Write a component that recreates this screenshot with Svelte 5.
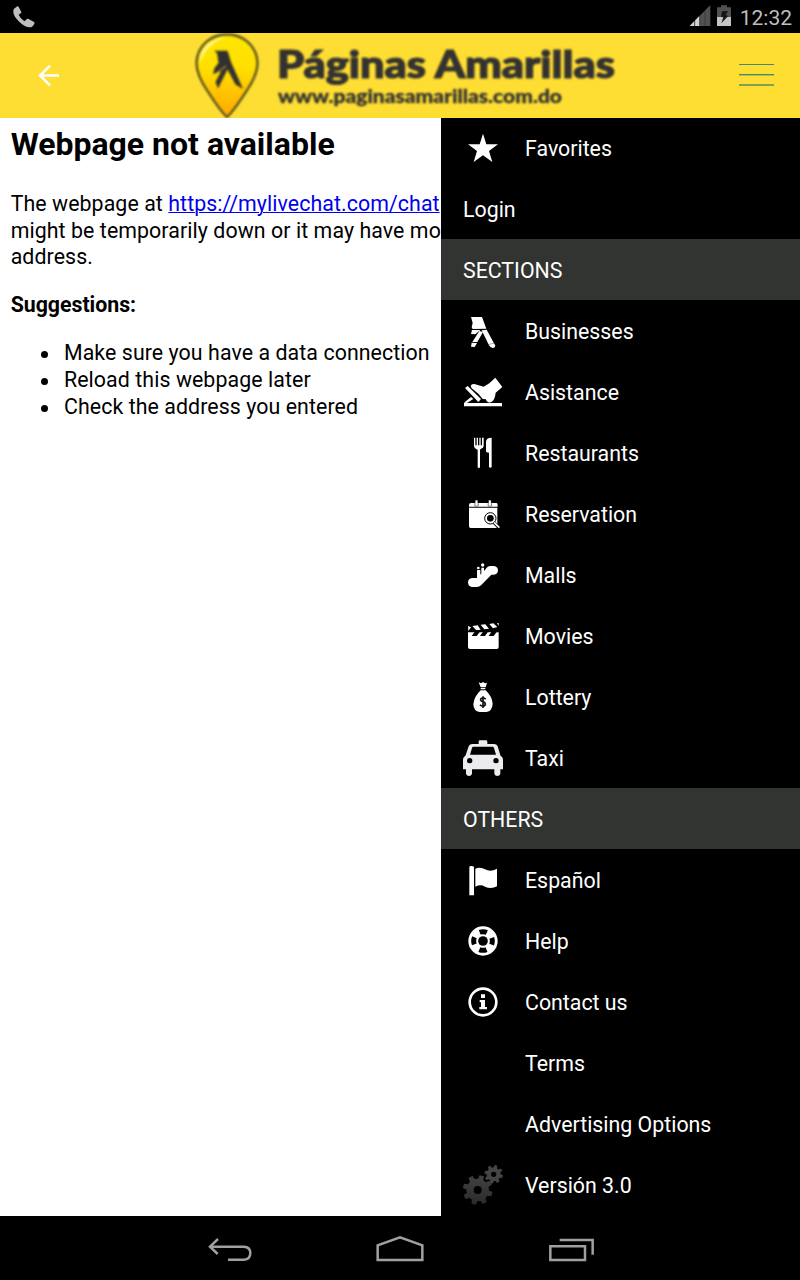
<script>
  const rows = [
    { label: 'Favorites', icon: 'star', vy: -24 },
    { label: 'Login', kind: 'plain' },
    { label: 'SECTIONS', kind: 'section' },
    { label: 'Businesses', icon: 'fingers', vy: -15 },
    { label: 'Asistance', icon: 'hand', vy: 168 },
    { label: 'Restaurants', icon: 'food', vy: 351 },
    { label: 'Reservation', icon: 'calendar', vy: -6 },
    { label: 'Malls', icon: 'escalator', vy: 177 },
    { label: 'Movies', icon: 'clapper', vy: 360 },
    { label: 'Lottery', icon: 'bag', vy: 3 },
    { label: 'Taxi', icon: 'taxi', vy: 186 },
    { label: 'OTHERS', kind: 'section' },
    { label: 'Español', icon: 'flag', vy: -18 },
    { label: 'Help', icon: 'ring', vy: 165 },
    { label: 'Contact us', icon: 'info', vy: 348 },
    { label: 'Terms', icon: 'none', vy: 0 },
    { label: 'Advertising Options', icon: 'none', vy: 0 },
    { label: 'Versión 3.0', icon: 'gears', vy: -3 }
  ];

  // Outline of a gear with flat teeth and a round hole in the middle
  function gear(cx, cy, outer, inner, hole, teeth, turn) {
    const step = (Math.PI * 2) / teeth;
    const pts = [];
    for (let i = 0; i < teeth; i++) {
      const a = i * step + turn;
      for (const [r, o] of [[inner, -0.31], [outer, -0.19], [outer, 0.19], [inner, 0.31]]) {
        pts.push(`${(cx + r * Math.cos(a + o * step)).toFixed(1)} ${(cy + r * Math.sin(a + o * step)).toFixed(1)}`);
      }
    }
    return `M${pts.join('L')}ZM${cx - hole} ${cy}a${hole} ${hole} 0 1 0 ${hole * 2} 0a${hole} ${hole} 0 1 0 ${-hole * 2} 0Z`;
  }
</script>

<div class="screen">
  <div class="status">
    <svg class="phone" width="36" height="33" viewBox="0 0 108 99">
      <path fill="#bebebe" d="M42 26l10-7q3-1 4 2l8 15q1 3-2 4l-6 4q4 10 17 20l8-7q3-2 5 0l16 9q3 2 1 5-5 11-14 11-15 0-33-18Q38 46 40 31z" />
    </svg>
    <div class="state">
      <svg width="44" height="33" viewBox="867 0 132 99">
        <path fill="#505250" d="M869 78L931 15V78z" />
        <path fill="#d4d4d4" d="M869 78L898 48V78z" />
        <path stroke="#000" stroke-width="2" d="M884 60v18" />
        <path stroke="#222" stroke-width="1.500" d="M899 44v34M915 28v50" />
        <path fill="#505250" d="M951 22h12v-6h18v6h12v30h-42z" />
        <path fill="#c4c4c4" d="M951 51h42v27h-42z" />
        <path fill="#151515" d="M966 34l18-1-7 13 8 1-21 23 6-18-7-1z" />
      </svg>
      <span class="time">12:32</span>
    </div>
  </div>

  <header>
    <svg class="back" width="24" height="85" viewBox="111 99 72 255">
      <path d="M150 197L120 226.500L150 256M120 226.500H177" fill="none" stroke="#fff" stroke-width="7.500" />
    </svg>
    <svg class="brand" width="430" height="85" viewBox="190 33 430 85">
      <defs>
        <linearGradient id="pin" x1="0" y1="0" x2="0" y2="1">
          <stop offset="0" stop-color="#ffe600" />
          <stop offset=".4" stop-color="#ffe000" />
          <stop offset="1" stop-color="#ffa800" />
        </linearGradient>
      </defs>
      <g class="soft">
        <path d="M227 34.300C243 34.300 257 46 257.500 63C257.500 72 252 83 246.500 91C240 101 233 112 227 117C221 112 214 101 207.500 91C202 83 196.500 72 196.500 63C197 46 211 34.300 227 34.300Z" fill="url(#pin)" stroke="#4b4525" stroke-width="2.200" />
        <path d="M200 63C199 48 211 38 226 37C213 42 204 50 200 63Z" fill="#fffbb0" opacity=".75" />
        <path d="M214 50.800H227.500L231 62L243 89L235.500 84.500L227.500 69.500L218 88.500L215.500 82L221 71.500L213 74L214.500 68L218.500 63L217 53Z" fill="#323130" />
        <path d="M216 73.500L226 66" stroke="#f4c70a" stroke-width="1" />
        <text class="name" x="277" y="77.500" textLength="338" lengthAdjust="spacingAndGlyphs">Páginas Amarillas</text>
        <text class="url" x="278" y="102.500" textLength="284" lengthAdjust="spacingAndGlyphs">www.paginasamarillas.com.do</text>
      </g>
    </svg>
    <svg class="burger" width="36" height="85" viewBox="739 33 36 85">
      <path fill="#438878" d="M739 64h35v1h-35zM739 74h35v1h-35z" />
      <path fill="#b3bd4a" d="M739 75h35v1h-35z" />
      <path fill="#82a150" d="M739 84h35v2h-35z" />
    </svg>
  </header>

  <div class="content">
    <main>
      <h2>Webpage not available</h2>
      <p>The webpage at <a href="https://mylivechat.com/chat">https://mylivechat.com/chat</a><br />might be temporarily down or it may have mo<br />address.</p>
      <p><b>Suggestions:</b></p>
      <ul>
        <li>Make sure you have a data connection</li>
        <li>Reload this webpage later</li>
        <li>Check the address you entered</li>
      </ul>
    </main>

    <aside>
      {#each rows as row}
        <div class="row {row.kind ?? 'item'}">
          {#if row.icon}
            <svg class="icon" width="60" height="61" viewBox="0 {row.vy} 180 183" fill="#fff">
              {#if row.icon === 'star'}
                <path d="M84 26L94 58H129L102 78L112 111L84 91L56 111L66 78L39 58H74Z" />
              {:else if row.icon === 'fingers'}
                <path d="M48 36H81L94 71L53 72L50 67L53 54Z" />
                <path d="M80 76L95 74L121 122Q120 129 113 129Q106 129 102 121Z" />
                <path d="M51 75H76L61 88L48 87ZM73 78L84 81L67 111L52 111Z" />
                <path d="M50 113L66 114L59 126L48 125Z" />
                <path d="M99 119L118 114" stroke="#555" stroke-width="1.500" />
              {:else if row.icon === 'hand'}
                <path d="M27 294H141V304H27ZM27 293L48 276L55 282L36 294Z" />
                <path d="M30 249L38 243L78 282L70 291Z" />
                <path d="M47 243Q49 236 58 237L86 245L103 235L121 218L142 246L122 263Q120 285 108 292Q94 294 93 283L83 282L70 266L50 250Z" />
              {:else if row.icon === 'food'}
                <path d="M57 398h4v23h4v-23h4v23h4v-23h4v23h4v-23h5v25q0 6-9 9l-2 2v53q-3 5-7 0v-53q-11-5-11-12z" />
                <path d="M93 411Q93 398 110 398V486Q106 491 102 486V443Q93 443 93 438Z" />
              {:else if row.icon === 'calendar'}
                <path d="M42 60q0-6 6-6H124q4 0 4 6v5H42zM42 68H127V124q0 5-5 5H47q-5 0-5-5z" />
                <path d="M61 45h7l2 17q-6 4-11 0zM101 45h7l2 17q-6 4-11 0z" stroke="#000" stroke-width="1.500" />
                <circle cx="106" cy="100" r="17" fill="#fff" stroke="#000" stroke-width="3" />
                <circle cx="106" cy="100" r="10" fill="#000" />
                <path d="M116 112L132 128" stroke="#000" stroke-width="9" />
                <path d="M117 112L133 128" stroke="#fff" stroke-width="5" />
              {:else if row.icon === 'escalator'}
                <path d="M51 279H66V258Q65 254 70 255H76V268H79V248H87V258L98 245Q101 243 106 243H117Q129 245 129 256Q128 269 116 269H109L79 300Q73 306 65 306H51Q39 304 39 292Q40 280 51 279Z" />
                <circle cx="70" cy="249" r="4" /><circle cx="83" cy="240" r="5" />
              {:else if row.icon === 'clapper'}
                <path d="M39 442H131V486q0 6-6 6H45q-6 0-6-6z" />
                <path d="M39 423L48 427L40 438ZM52 423L68 421L77 434L64 436ZM77 419L91 418L102 431L88 433ZM103 417L115 415L127 426L114 430ZM126 414L131 414L131 423Z" />
                <path d="M50 453L63 435L77 437L65 453ZM75 453L88 435L101 437L90 453ZM101 453L113 435L128 437L116 453Z" fill="#000" />
              {:else if row.icon === 'bag'}
                <path d="M71 52L78 55L84 51L90 55L96 53L92 67H77ZM77 69H91V73H77ZM77 76H92Q111 94 113 116Q112 138 94 141H74Q56 139 55 118Q57 95 77 76Z" />
                <path d="M92 103Q88 98 83 99Q76 100 77 105Q78 109 84 110Q91 112 91 117Q91 123 84 123Q78 123 75 119M84 94V129" fill="none" stroke="#111" stroke-width="5" />
              {:else if row.icon === 'taxi'}
                <path fill="#ececef" fill-rule="evenodd" d="M71 237V230q0-4 4-4H93q4 0 4 4V237H117q8 0 11 7l8 27q8 6 8 15V313h-8v13q-2 7-9 7t-9-7V313H51v13q-2 7-9 7t-9-7V313H24V286q0-9 8-15l9-27q3-7 11-7zM55 245q-3 0-4 4l-6 20H123l-6-20q-1-4-5-4z" />
                <circle cx="44" cy="287" r="8" fill="#000" /><circle cx="123" cy="287" r="8" fill="#000" />
              {:else if row.icon === 'flag'}
                <path d="M43 36q0-3 6-3t8 3V121H43zM61 41Q77 35 90 43Q107 52 126 41V94Q108 104 90 95Q77 87 61 95Z" />
              {:else if row.icon === 'ring'}
                <circle cx="84" cy="258" r="44" />
                <circle cx="84" cy="258" r="28" fill="none" stroke="#000" stroke-width="15" stroke-dasharray="22 21.980" stroke-dashoffset="11" />
                <circle cx="84" cy="258" r="14.500" fill="#000" />
              {:else if row.icon === 'info'}
                <circle cx="84" cy="441" r="40" fill="none" stroke="#fff" stroke-width="8" />
                <path d="M78 418H90V429H78ZM74 435H90V456H96V463H73V456H78V442H74Z" />
              {:else if row.icon === 'gears'}
                <defs>
                  <linearGradient id="metal" x1="0" y1="0" x2="0" y2="1">
                    <stop offset="0" stop-color="#414142" />
                    <stop offset="1" stop-color="#2b2b2c" />
                  </linearGradient>
                </defs>
                <path fill="url(#metal)" fill-rule="evenodd" d={gear(68, 105, 45, 34, 12, 8, 0.28)} />
                <path fill="#454546" fill-rule="evenodd" d={gear(116, 58, 28, 21, 8, 8, 0.25)} />
              {/if}
            </svg>
          {/if}
          <span>{row.label}</span>
        </div>
      {/each}
    </aside>
  </div>

  <nav>
    <svg width="430" height="60" viewBox="0 0 1290 180" fill="none" stroke="#a0a0a0" stroke-width="7.500">
      <path d="M84 57L60 80L83 102M62 80H162Q181 81 181 99Q181 118 162 119H114" />
      <path d="M563 120V76L630 52L697 76V120Z" />
      <path d="M1081 79H1185V120H1081ZM1109 60H1208V104" />
    </svg>
  </nav>
</div>

<style>
  :global(body) { margin: 0; }
  .screen {
    width: 800px;
    height: 1280px;
    display: flex;
    flex-direction: column;
    overflow: hidden;
    background: #000;
    font-family: Roboto, sans-serif;
  }
  svg { display: block; flex: none; }
  .status { height: 33px; display: flex; justify-content: space-between; }
  .state { display: flex; align-items: center; padding-right: 8px; gap: 7px; }
  .time { color: #bebebe; font-size: 21px; line-height: 33px; padding-top: 3px; }
  header {
    height: 85px;
    background: #ffde33;
    display: flex;
    justify-content: space-between;
    padding: 0 25px 0 37px;
  }
  .brand { margin-left: 10px; }
  .soft { filter: blur(0.8px); }
  .brand text { fill: #333230; stroke: #333230; font-family: Lato, sans-serif; font-weight: 900; }
  .name { font-size: 37px; stroke-width: 1.200px; }
  .url { font-size: 19px; stroke-width: 0.3px; }
  .content { height: 1098px; display: flex; overflow: hidden; }
  main {
    width: 441px;
    flex: none;
    box-sizing: border-box;
    padding: 7px 0 0 10.670px;
    background: #fff;
    color: #000;
    font-size: 21.330px;
    line-height: 26.670px;
    letter-spacing: 0.08px;
    white-space: nowrap;
    overflow: hidden;
  }
  h2 { margin: 0 0 28px; font-size: 32px; line-height: 38px; letter-spacing: 0; }
  p { margin: 0 0 21.330px; }
  b { letter-spacing: -0.03px; }
  a { color: #0000ee; text-decoration: underline; text-decoration-thickness: 1.300px; }
  ul { margin: 0; padding-left: 30.330px; list-style: none; }
  li { display: flex; align-items: center; gap: 16px; }
  li::before { content: ''; width: 7px; height: 7px; border-radius: 50%; background: #000; margin-top: 2px; }
  aside { flex: 1; margin-top: -1px; }
  .row {
    height: 61px;
    display: flex;
    align-items: center;
    color: #fff;
    font-size: 21.330px;
  }
  .row span { padding-top: 2px; }
  .item { padding-left: 14px; gap: 10px; }
  .plain, .section { padding-left: 22px; }
  .section { background: #323432; }
  nav { height: 64px; display: flex; padding: 4px 0 0 190px; box-sizing: border-box; }
</style>
